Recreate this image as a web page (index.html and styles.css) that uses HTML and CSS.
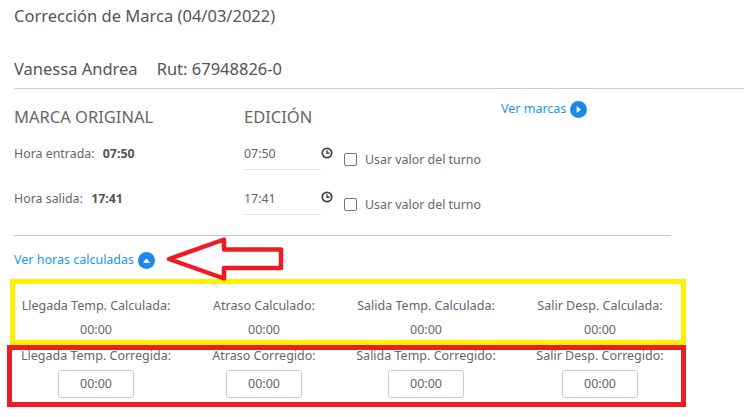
FILE: index.html
```html
<!DOCTYPE html>
<html lang="es">
<head>
<meta charset="utf-8">
<title>Corrección de Marca</title>
<link rel="stylesheet" href="styles.css">
</head>
<body>
<main class="page">
  <h1 class="title">Corrección de Marca (04/03/2022)</h1>
  <div class="person"><span>Vanessa Andrea</span><span>Rut: 67948826-0</span></div>
  <section class="marks">
    <div class="heads">
      <h2 class="head head-orig">MARCA ORIGINAL</h2>
      <h2 class="head head-edit">EDICIÓN</h2>
      <a class="link link-marks">Ver marcas
        <svg class="round" viewBox="0 0 16 16"><circle cx="8" cy="8" r="8" fill="#1e88e5"/><path d="M6.300 4.800 10.200 8l-3.900 3.200z" fill="#fff"/></svg>
      </a>
    </div>
    <div class="row">
      <div class="orig">Hora entrada: <b>07:50</b></div>
      <div class="time">07:50</div>
      <svg class="clock" viewBox="0 0 12 12"><circle cx="6" cy="6" r="4.700" fill="none" stroke="#444" stroke-width="1.800"/><path d="M6 3.200V6.300H8.600" fill="none" stroke="#444" stroke-width="1.400"/></svg>
      <label class="check"><span class="box"></span>Usar valor del turno</label>
    </div>
    <div class="row row-out">
      <div class="orig">Hora salida: <b>17:41</b></div>
      <div class="time">17:41</div>
      <svg class="clock" viewBox="0 0 12 12"><circle cx="6" cy="6" r="4.700" fill="none" stroke="#444" stroke-width="1.800"/><path d="M6 3.200V6.300H8.600" fill="none" stroke="#444" stroke-width="1.400"/></svg>
      <label class="check"><span class="box"></span>Usar valor del turno</label>
    </div>
  </section>
  <a class="link link-hours">Ver horas calculadas
    <svg class="round" viewBox="0 0 16 16"><circle cx="8" cy="8" r="8" fill="#1e88e5"/><path d="M4.600 10 8 6l3.400 4z" fill="#fff"/></svg>
  </a>
  <div class="grid grid-calc">
    <div class="cell"><div>Llegada Temp. Calculada:</div><div class="val">00:00</div></div>
    <div class="cell"><div>Atraso Calculado:</div><div class="val">00:00</div></div>
    <div class="cell"><div>Salida Temp. Calculada:</div><div class="val">00:00</div></div>
    <div class="cell"><div>Salir Desp. Calculada:</div><div class="val">00:00</div></div>
  </div>
  <div class="grid grid-corr">
    <div class="cell"><div>Llegada Temp. Corregida:</div><div class="input">00:00</div></div>
    <div class="cell"><div>Atraso Corregido:</div><div class="input">00:00</div></div>
    <div class="cell"><div>Salida Temp. Corregido:</div><div class="input">00:00</div></div>
    <div class="cell"><div>Salir Desp. Corregido:</div><div class="input">00:00</div></div>
  </div>
</main>
<div class="mark mark-yellow"></div>
<div class="mark mark-red"></div>
<svg class="arrow" viewBox="0 0 120 46"><path d="M4 23 59 3.500V13.500H116V32H59V42.500z" fill="#fff" stroke="#ed1c24" stroke-width="4.500" stroke-linejoin="round"/></svg>
</body>
</html>
```
FILE: styles.css
```css
* { box-sizing: border-box; }
html, body { margin: 0; background: #fff; overflow: hidden; }
body { height: 417px; position: relative; font-family: "Noto Sans", "Open Sans", sans-serif; color: #666; }
.page { padding: 6px 0 0 14px; }
.title { margin: 0; font-size: 16.500px; line-height: 20px; font-weight: 400; color: #555; }
.person { display: flex; gap: 19px; margin-top: 33px; margin-right: -14px; height: 30px; font-size: 16.500px; line-height: 20px; color: #555; border-bottom: 1px solid #ccc; }
.marks { width: 657px; height: 147px; border-bottom: 1px solid #c8c8c8; }
.heads { display: flex; align-items: center; padding-top: 14px; height: 42px; }
.head { margin: 0; font-size: 16.500px; line-height: 20px; font-weight: 400; color: #666; }
.head-orig { width: 230px; }
.head-edit { width: 257px; }
.link { display: inline-flex; align-items: center; gap: 4px; color: #2196f3; font-size: 12.500px; line-height: 16px; }
.link-marks { position: relative; top: -8px; }
.round { width: 17px; height: 17px; flex: none; }
.row { display: flex; align-items: flex-start; height: 45px; padding-top: 14px; font-size: 12.400px; }
.orig { width: 230px; line-height: 18px; color: #666; }
.orig b { margin-left: 5px; color: #555; }
.time { width: 77px; height: 25px; line-height: 18px; color: #666; border-bottom: 1px solid #e4e4e4; }
.clock { width: 12px; height: 12px; margin-top: 2px; flex: none; }
.row-out .clock { margin-top: 1px; }
.check { display: flex; align-items: center; margin: 6px 0 0 11px; color: #666; line-height: 18px; }
.box { width: 13px; height: 13px; margin: -1px 8px 0 0; border: 1px solid #767676; border-radius: 2px; background: #fff; }
.link-hours { margin-top: 16px; height: 16px; }
.grid { display: grid; grid-template-columns: 164px 172px 152px 196px; font-size: 12.500px; text-align: center; color: #666; }
.grid-calc { margin-top: 28px; }
.grid-corr { margin-top: 8px; }
.cell { display: flex; flex-direction: column; align-items: center; line-height: 18px; white-space: nowrap; }
.val { margin-top: 6px; }
.input { width: 76px; height: 28px; margin-top: 5px; line-height: 26px; border: 1px solid #ccc; border-radius: 3px; }
.mark { position: absolute; border-style: solid; pointer-events: none; }
.mark-yellow { left: 10px; top: 279px; width: 676px; height: 66px; border-width: 5px; border-color: #fff200; }
.mark-red { left: 7px; top: 345px; width: 679px; height: 62px; border-width: 5px; border-color: #ed1c24; }
.arrow { position: absolute; left: 165px; top: 236px; width: 120px; height: 46px; }
```
